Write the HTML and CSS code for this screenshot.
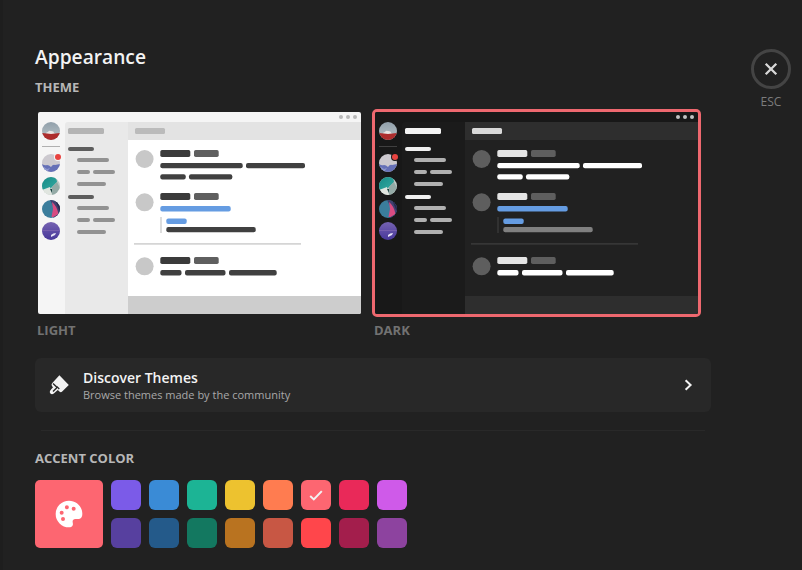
FILE: index.html
```html
<!DOCTYPE html>
<html lang="en">
<head>
<meta charset="utf-8">
<title>Appearance</title>
<link rel="stylesheet" href="styles.css">
</head>
<body>
<svg class="defs" width="0" height="0" aria-hidden="true">
  <defs>
    <linearGradient id="sky" x2="0" y2="1"><stop offset="0" stop-color="#91a0ab"/><stop offset="1" stop-color="#bac4c7"/></linearGradient>
    <linearGradient id="teal" x2="1" y2="1"><stop offset="0" stop-color="#168b87"/><stop offset="1" stop-color="#35aaa1"/></linearGradient>
    <linearGradient id="violet" x2="0" y2="1"><stop offset="0" stop-color="#7562b1"/><stop offset="1" stop-color="#47379a"/></linearGradient>
    <clipPath id="round"><circle cx="9" cy="9" r="9"/></clipPath>
    <symbol id="client" viewBox="0 0 323 202">
      <rect class="p-base" width="323" height="202"/>
      <path class="p-side" d="M27 202V13q0-3 3-3h60v192z"/>
      <path class="p-chat" d="M90 28h233v156H90z"/>
      <path class="p-head" d="M90 10h233v18H90z"/>
      <path class="p-foot" d="M90 184h233v18H90z"/>
      <g class="p-dots"><circle cx="303" cy="5" r="2"/><circle cx="310" cy="5" r="2"/><circle cx="317" cy="5" r="2"/></g>
      <g transform="translate(4 10)" clip-path="url(#round)">
        <path fill="url(#sky)" d="M0 0h18v18H0z"/><path fill="#e9e6e4" d="M4 12q0-2 2-2 1-2 3-1 3 0 3 2l2 1z"/><path fill="#ad2d2d" d="M0 11l5 .5 4 .5 4-.5 5-.5v8H0z"/>
      </g>
      <path class="p-sep" d="M4 34h18v1H4z"/>
      <g transform="translate(4 42)" clip-path="url(#round)">
        <path fill="#ccc9cf" d="M0 0h18v18H0z"/><path fill="#6570b7" d="M0 10q3 2 5 1 2 0 4 2 2-3 4-2l5-1v8H0z"/><path fill="#8d96cd" d="M2 13l3 2 3-1-3 4H0z"/>
      </g>
      <circle class="p-notch" cx="20" cy="45" r="4"/><circle fill="#e84340" cx="20" cy="45" r="3"/>
      <g transform="translate(4 65)" clip-path="url(#round)">
        <path fill="#bfc9c5" d="M0 0h18v18H0z"/><path fill="url(#teal)" d="M0 0h14l1 5-7 7-8 1z"/><path fill="#e0e5df" d="M0 13l8-3 2 8H3z"/><path fill="#1b4543" d="M8 12l2 0v4z"/><path fill="#94aaa6" d="M15 5l3 6-5 7h-3V10z"/>
      </g>
      <g transform="translate(4 88)" clip-path="url(#round)">
        <path fill="#3b7d9c" d="M0 0h18v18H0z"/><path fill="#424070" d="M8 0h10v18H11l1-10z"/><path fill="#28294d" d="M13 0h5v12z"/><path fill="#d84c82" d="M10 2q5 4 6.500 12l-5 3h-2l1.500-8z"/>
      </g>
      <g transform="translate(4 110)" clip-path="url(#round)">
        <path fill="url(#violet)" d="M0 0h18v18H0z"/><path fill="#8b70b5" opacity=".5" d="M0 8h18v1H0z"/><path fill="#e7e4f5" d="M9 13q2-2 5-2l-1 2-4 2z"/>
      </g>
      <rect class="p-title" x="30" y="16" width="36" height="6" rx="1.5"/>
      <rect class="p-topic" x="97" y="16" width="30" height="6" rx="1.5"/>
      <g class="p-cat"><rect x="30" y="35" width="26" height="4" rx="2"/><rect x="30" y="83" width="26" height="4" rx="2"/></g>
      <g class="p-item">
        <rect x="39" y="46" width="32" height="4" rx="2"/><rect x="39" y="58" width="13" height="4" rx="2"/><rect x="55" y="58" width="22" height="4" rx="2"/><rect x="39" y="70" width="29" height="4" rx="2"/>
        <rect x="39" y="94" width="32" height="4" rx="2"/><rect x="39" y="106" width="13" height="4" rx="2"/><rect x="55" y="106" width="22" height="4" rx="2"/><rect x="39" y="118" width="29" height="4" rx="2"/>
      </g>
      <g class="p-face"><circle cx="106.6" cy="47" r="9"/><circle cx="106.6" cy="90.3" r="9"/><circle cx="106.6" cy="154.3" r="9"/></g>
      <g class="p-name"><rect x="122.3" y="38" width="30" height="7" rx="1.7"/><rect x="122.3" y="81" width="30" height="7" rx="1.7"/><rect x="122.3" y="145" width="30" height="7" rx="1.7"/></g>
      <g class="p-time"><rect x="156" y="38" width="24.7" height="7" rx="1.7"/><rect x="156" y="81" width="24.7" height="7" rx="1.7"/><rect x="156" y="145" width="24.7" height="7" rx="1.7"/></g>
      <g class="p-text">
        <rect x="122.3" y="51" width="82.4" height="5.2" rx="2"/><rect x="208" y="51" width="59" height="5.2" rx="2"/>
        <rect x="122.3" y="62.2" width="25.4" height="5.2" rx="2"/><rect x="151" y="62.2" width="43.3" height="5.2" rx="2"/>
        <rect x="122.3" y="158" width="21.2" height="5.5" rx="2"/><rect x="147" y="158" width="40.5" height="5.5" rx="2"/><rect x="191" y="158" width="47.7" height="5.5" rx="2"/>
      </g>
      <g fill="#659ce2"><rect x="122.3" y="94" width="70.4" height="5.5" rx="2"/><rect x="128.3" y="106.5" width="20.4" height="5.5" rx="2"/></g>
      <rect class="p-quote" x="128.3" y="115" width="89.4" height="5.2" rx="2"/>
      <path class="p-rule" d="M122.2 105h1.6v16h-1.6zM96 131h167v1.7H96z"/>
    </symbol>
  </defs>
</svg>
<main class="page">
  <section class="content">
    <h1 class="title">Appearance</h1>
    <h3 class="label">Theme</h3>
    <div class="themes">
      <div class="theme light">
        <svg class="preview" width="323" height="202"><use href="#client"/></svg>
        <h4 class="caption">Light</h4>
      </div>
      <div class="theme dark active">
        <svg class="preview" width="323" height="202"><use href="#client"/></svg>
        <h4 class="caption">Dark</h4>
      </div>
    </div>
    <a class="discover">
      <svg class="brush" width="24" height="24" viewBox="0 0 24 24" fill="currentColor"><path d="M12.400 2.300L21.800 12l-6.600 6.600q-1.400 1.200-2.800 0l-1.600-1.600-4 3.600q-1.900 1.400-3.400 0-1.400-1.600 0-3.300L6 14.200l-.9-1q-1.200-1.400 0-2.900z"/><path class="brush-cut" d="M6 10.600l3.400 3.200q.6.700-.1 1.500l-3.300 3.300M9.700 13.600l2.600 2.300"/></svg>
      <span class="discover-text"><span class="discover-name">Discover Themes</span><span class="discover-info">Browse themes made by the community</span></span>
      <svg class="chevron" width="20" height="20" viewBox="0 0 20 20"><path d="M7.600 5.200l5 4.800-5 4.800"/></svg>
    </a>
    <hr class="divider">
    <h3 class="label accent-label">Accent color</h3>
    <div class="accent">
      <div class="picker">
        <svg width="32" height="32" viewBox="0 0 24 24" fill="currentColor"><path fill-rule="evenodd" d="M12 2a10 10 0 0 0 0 20c1.400 0 2.600-.6 2.900-1.900.2-.9-.2-1.500-.2-2.400 0-1.200.8-2 2-2H19.500c1.500 0 2.500-1.500 2.500-3.700C22 6.200 17.500 2 12 2zM6.500 12.500a1.500 1.500 0 1 1 0-3 1.500 1.500 0 0 1 0 3zm3.900-4a1.500 1.500 0 1 1 0-3 1.500 1.500 0 0 1 0 3zm5.100 1a1.500 1.500 0 1 1 0-3 1.500 1.500 0 0 1 0 3zM7.500 17.200a1.500 1.500 0 1 1 0-3 1.500 1.500 0 0 1 0 3z"/></svg>
      </div>
      <div class="swatches">
        <i class="swatch violet"></i><i class="swatch blue"></i><i class="swatch green"></i><i class="swatch yellow"></i><i class="swatch orange"></i>
        <i class="swatch coral"><svg width="20" height="20" viewBox="0 0 20 20"><path d="M4.200 11l3.600 3.400 8-8.300"/></svg></i>
        <i class="swatch rose"></i><i class="swatch pink"></i>
        <i class="swatch violet-dark"></i><i class="swatch blue-dark"></i><i class="swatch green-dark"></i><i class="swatch yellow-dark"></i><i class="swatch orange-dark"></i><i class="swatch red"></i><i class="swatch rose-dark"></i><i class="swatch pink-dark"></i>
      </div>
    </div>
  </section>
  <aside class="exit">
    <div class="close"><svg width="20" height="20" viewBox="0 0 20 20"><path d="M4.700 4.700l10.600 10.600M15.300 4.700L4.700 15.300"/></svg></div>
    <span class="esc">ESC</span>
  </aside>
</main>
</body>
</html>
```
FILE: styles.css
```css
* { box-sizing: border-box; }
body { margin: 0; background: #212121; color: #f3f3f3; font-family: "Open Sans", sans-serif; }
h1, h3, h4 { margin: 0; }
svg { display: block; }
.defs { position: absolute; }
.page { display: flex; justify-content: space-between; height: 570px; overflow: hidden; border-left: 3px solid #1e1e1e; padding: 44px 11px 0 32px; }
.content { width: 676px; }
.title { font-size: 19.2px; line-height: 26px; font-weight: 600; }
.label { margin-top: 8px; font-size: 13px; line-height: 18px; font-weight: 700; color: #b7b7b7; text-transform: uppercase; }

.themes { display: flex; gap: 8px; margin-top: 13px; }
.preview { border: 3px solid transparent; border-radius: 5px; width: 329px; height: 208px; overflow: hidden; }
.active .preview { border-color: #ee686f; }
.caption { margin: 4px 0 0 2px; font-size: 13px; line-height: 18px; font-weight: 700; color: #727272; text-transform: uppercase; }

.light { --base: #f5f5f5; --side: #e9e9e9; --chat: #fff; --head: #e3e3e3; --foot: #cdcdcd; --dots: #b8b8b8; --sep: #b0b0b0; --notch: #f5f5f5; --title: #b4b4b4; --topic: #bbb; --cat: #5d5d5d; --item: #929292; --face: #c8c8c8; --name: #3b3b3b; --time: #5f5f5f; --text: #404040; --quote: #404040; --rule: #d5d5d5; }
.dark { --base: #181818; --side: #1b1b1b; --chat: #212121; --head: #2e2e2e; --foot: #2e2e2e; --dots: #c2c2c2; --sep: #404040; --notch: #181818; --title: #f3f3f3; --topic: #d8d8d8; --cat: #f0f0f0; --item: #b0b0b0; --face: #5e5e5e; --name: #e4e4e4; --time: #5e5e5e; --text: #fff; --quote: #808080; --rule: #363636; }
.p-base { fill: var(--base); }
.p-side { fill: var(--side); }
.p-chat { fill: var(--chat); }
.p-head { fill: var(--head); }
.p-foot { fill: var(--foot); }
.p-dots { fill: var(--dots); }
.p-sep { fill: var(--sep); }
.p-notch { fill: var(--notch); }
.p-title { fill: var(--title); }
.p-topic { fill: var(--topic); }
.p-cat { fill: var(--cat); }
.p-item { fill: var(--item); }
.p-face { fill: var(--face); }
.p-name { fill: var(--name); }
.p-time { fill: var(--time); }
.p-text { fill: var(--text); }
.p-quote { fill: var(--quote); }
.p-rule { fill: var(--rule); }

.discover { display: flex; align-items: center; height: 54px; margin-top: 19px; padding: 0 13.5px 0 12px; border-radius: 6px; background: #282828; }
.brush-cut { fill: none; stroke: #282828; stroke-width: 1.4; }
.discover-text { display: flex; flex-direction: column; flex: 1; margin-left: 12px; }
.discover-name { font-size: 14px; line-height: 19px; font-weight: 600; }
.discover-info { font-size: 11px; line-height: 15px; color: #a8a8a8; }
.chevron path, .close path, .swatch path { fill: none; stroke: #f3f3f3; stroke-width: 2; }
.divider { height: 1px; margin: 18px 6px 0; border: 0; background: #292929; }
.accent-label { margin-top: 18px; }
.accent { display: flex; gap: 8px; margin-top: 13px; }
.picker { display: flex; align-items: center; justify-content: center; width: 68px; height: 68px; border-radius: 5px; background: #fd6671; color: #fff; }
.swatches { display: grid; grid-template-columns: repeat(8, 30px); grid-auto-rows: 30px; gap: 8px; }
.swatch { display: flex; align-items: center; justify-content: center; border-radius: 6px; }
.violet { background: #7b5be8; }
.blue { background: #3a8bd6; }
.green { background: #1cb495; }
.yellow { background: #edc22f; }
.orange { background: #ff7c50; }
.coral { background: #fd6671; }
.rose { background: #e92959; }
.pink { background: #cf5ae9; }
.violet-dark { background: #57409f; }
.blue-dark { background: #245a8a; }
.green-dark { background: #137860; }
.yellow-dark { background: #b97320; }
.orange-dark { background: #c85744; }
.red { background: #ff464b; }
.rose-dark { background: #a31e4c; }
.pink-dark { background: #8d439f; }

.exit { display: flex; flex-direction: column; align-items: center; width: 40px; padding-top: 5px; }
.close { display: flex; align-items: center; justify-content: center; width: 40px; height: 40px; border: 3px solid #444; border-radius: 50%; }
.close path { stroke: #d8d8d8; stroke-width: 2.3; }
.esc { margin-top: 5px; font-size: 12px; line-height: 16px; color: #7c7c7c; }
```
